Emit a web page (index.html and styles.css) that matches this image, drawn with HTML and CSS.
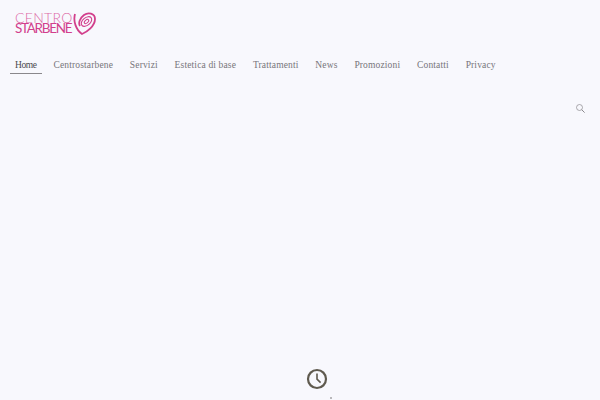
FILE: index.html
```html
<!DOCTYPE html>
<html lang="it">
<head>
  <meta charset="UTF-8">
  <title>Centro Starbene</title>
  <link rel="stylesheet" href="styles.css">
</head>
<body>
  <header class="site-header">
    <a class="logo" href="#">
      <span class="logo-text">
        <span class="logo-top">CENTRO</span>
        <span class="logo-bottom">STARBENE</span>
      </span>
      <svg class="logo-mark" width="24" height="24" viewBox="0 0 24 24" fill="none" stroke="#d23f8c">
        <path d="M3 3C1 10 4 19 10 23C15 21 23 15 23 8C23 2 16 1 12 4C8 7 6 12 8 15" stroke-width="1.8"/>
        <ellipse cx="14.5" cy="10.5" rx="6" ry="3.8" transform="rotate(-40 14.5 10.5)" stroke-width="1.1"/>
        <ellipse cx="14.5" cy="10.5" rx="2.6" ry="1.5" transform="rotate(-40 14.5 10.5)" stroke-width="1"/>
      </svg>
    </a>
    <nav class="main-nav">
      <a class="active" href="#">Home</a>
      <a href="#">Centrostarbene</a>
      <a href="#">Servizi</a>
      <a href="#">Estetica di base</a>
      <a href="#">Trattamenti</a>
      <a href="#">News</a>
      <a href="#">Promozioni</a>
      <a href="#">Contatti</a>
      <a href="#">Privacy</a>
    </nav>
    <div class="search-row">
      <svg width="9" height="9" viewBox="0 0 9 9" fill="none" stroke="#8a888c">
        <circle cx="3.5" cy="3.5" r="3" stroke-width="0.7"/>
        <path d="M5.7 5.7L8.6 8.6" stroke-width="1"/>
      </svg>
    </div>
  </header>
  <main class="notice">
    <svg width="22" height="22" viewBox="0 0 22 22" fill="none" stroke="#5f5a4f">
      <circle cx="11" cy="11" r="9" stroke-width="2.2"/>
      <path d="M11 5.5V11.2L14.6 14.6" stroke-width="1.6"/>
    </svg>
    <span class="notice-tick"></span>
  </main>
</body>
</html>
```
FILE: styles.css
```css
html, body {
  height: 400px;
  overflow: hidden;
}
body {
  margin: 0;
  background-color: #f8f8fd;
  font-family: "Liberation Serif", serif;
}
.site-header {
  padding: 10px 15px 0 10px;
}
.logo {
  display: flex;
  align-items: center;
  height: 25px;
  margin-left: 5px;
  text-decoration: none;
  color: #d23f8c;
  font-family: "Lato", sans-serif;
}
.logo-text {
  display: flex;
  flex-direction: column;
}
.logo-top {
  font-size: 14px;
  font-weight: 300;
  line-height: 11px;
  letter-spacing: 0.3px;
  color: #dd6aa6;
}
.logo-bottom {
  font-size: 13.5px;
  font-weight: 400;
  line-height: 11px;
  letter-spacing: -1.3px;
}
.logo-mark {
  margin-left: -1px;
}
.main-nav {
  display: flex;
  gap: 6.8px;
  margin-top: 18px;
}
.main-nav a {
  padding: 0 5px;
  height: 20px;
  line-height: 24px;
  font-size: 9.5px;
  letter-spacing: 0.15px;
  color: #77757a;
  text-decoration: none;
}
.main-nav a.active {
  color: #4c4a4e;
  letter-spacing: -0.4px;
  border-bottom: 1px solid #8a888c;
}
.search-row {
  display: flex;
  justify-content: flex-end;
  margin-top: 30px;
}
.notice {
  display: flex;
  flex-direction: column;
  align-items: center;
  margin-top: 255px;
  padding-left: 34px;
}
.notice-tick {
  width: 2px;
  height: 2px;
  margin: 7px 0 0 28px;
  background-color: #b9b8bb;
}
```
